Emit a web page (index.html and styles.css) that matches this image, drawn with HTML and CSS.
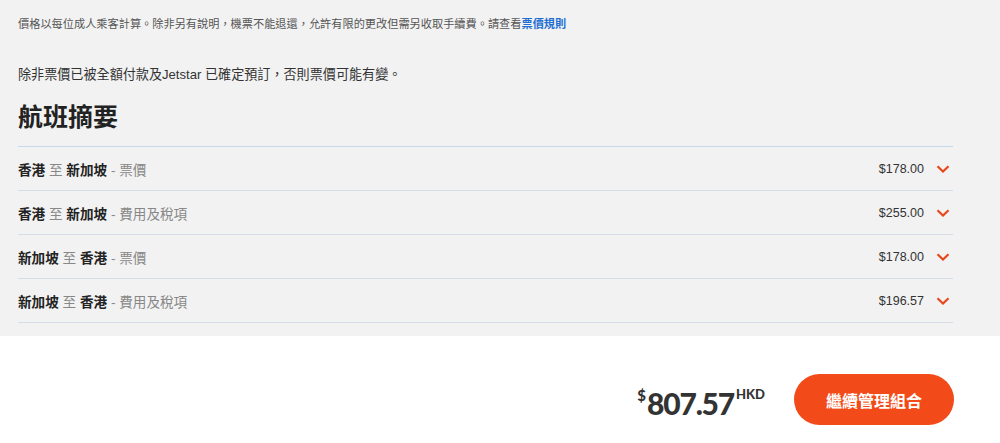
FILE: index.html
```html
<!DOCTYPE html>
<html lang="zh-Hant">
<head>
    <meta charset="UTF-8">
    <meta name="viewport" content="width=device-width, initial-scale=1.0">
    <title>航班摘要</title>
    <link rel="stylesheet" href="styles.css">
</head>
<body>
    <div class="summary">
        <p class="fare-note">價格以每位成人乘客計算。除非另有說明，機票不能退還，允許有限的更改但需另收取手續費。請查看<a href="#">票價規則</a></p>
        <p class="notice">除非票價已被全額付款及Jetstar 已確定預訂，否則票價可能有變。</p>
        <h1>航班摘要</h1>

        <ul class="legs">
            <li class="leg">
                <span class="route"><b>香港</b> 至 <b>新加坡</b> - 票價</span>
                <span class="amount">$178.00</span>
                <svg class="chevron" viewBox="0 0 14 8"><path d="M1.5 1.2 L7 6.5 L12.5 1.2" /></svg>
            </li>
            <li class="leg">
                <span class="route"><b>香港</b> 至 <b>新加坡</b> - 費用及稅項</span>
                <span class="amount">$255.00</span>
                <svg class="chevron" viewBox="0 0 14 8"><path d="M1.5 1.2 L7 6.5 L12.5 1.2" /></svg>
            </li>
            <li class="leg">
                <span class="route"><b>新加坡</b> 至 <b>香港</b> - 票價</span>
                <span class="amount">$178.00</span>
                <svg class="chevron" viewBox="0 0 14 8"><path d="M1.5 1.2 L7 6.5 L12.5 1.2" /></svg>
            </li>
            <li class="leg">
                <span class="route"><b>新加坡</b> 至 <b>香港</b> - 費用及稅項</span>
                <span class="amount">$196.57</span>
                <svg class="chevron" viewBox="0 0 14 8"><path d="M1.5 1.2 L7 6.5 L12.5 1.2" /></svg>
            </li>
        </ul>
    </div>

    <div class="checkout">
        <div class="total">
            <span class="currency-sign">$</span><span class="total-value">807.57</span><span class="currency-code">HKD</span>
        </div>
        <button class="continue">繼續管理組合</button>
    </div>
</body>
</html>
```

FILE: styles.css
```css
body {
    margin: 0;
    padding: 0;
    font-family: "Liberation Sans", "Noto Sans CJK TC", sans-serif;
    color: #333;
    background: #fff;
}

.summary {
    background: #f2f2f2;
    padding: 16px 47px 13px 18px;
}

.fare-note {
    margin: 0;
    font-size: 11.2px;
    line-height: 16px;
    color: #555;
}

.fare-note a {
    color: #1f6fd1;
    font-weight: bold;
    text-decoration: none;
}

.notice {
    margin: 34px 0 0;
    font-size: 13.1px;
    line-height: 18px;
    color: #333;
}

h1 {
    margin: 17px 0 13px;
    font-size: 25px;
    line-height: 32px;
    font-weight: bold;
    color: #222;
}

.legs {
    list-style: none;
    margin: 0;
    padding: 0;
    border-top: 1px solid #c6d8ec;
}

.leg {
    display: flex;
    align-items: center;
    height: 43px;
    border-bottom: 1px solid #d6dee8;
    font-size: 13.6px;
}

.route {
    flex: 1;
    color: #888;
}

.route b {
    color: #222;
}

.amount {
    color: #333;
    font-size: 12.5px;
}

.chevron {
    width: 14px;
    height: 8px;
    margin: 1px 3px 0 12px;
    fill: none;
    stroke: #e8471b;
    stroke-width: 2.2;
}

.checkout {
    display: flex;
    justify-content: flex-end;
    align-items: center;
    padding: 38px 46px 0 0;
}

.total {
    display: flex;
    align-items: flex-start;
    font-family: Lato, "Liberation Sans", sans-serif;
    font-weight: 900;
    color: #333;
    margin: 6px 29px 0 0;
}

.currency-sign {
    font-size: 15px;
    line-height: 15px;
    margin: 0 1px 0 0;
}

.total-value {
    font-size: 30px;
    line-height: 30px;
    letter-spacing: -1.2px;
}

.currency-code {
    font-size: 13px;
    line-height: 13px;
    margin: 0 0 0 2px;
}

.continue {
    width: 160px;
    height: 51px;
    border: none;
    border-radius: 26px;
    background: #f24b19;
    color: #fff;
    font-family: "Noto Sans CJK TC", sans-serif;
    font-size: 16px;
    font-weight: bold;
    cursor: pointer;
}
```
